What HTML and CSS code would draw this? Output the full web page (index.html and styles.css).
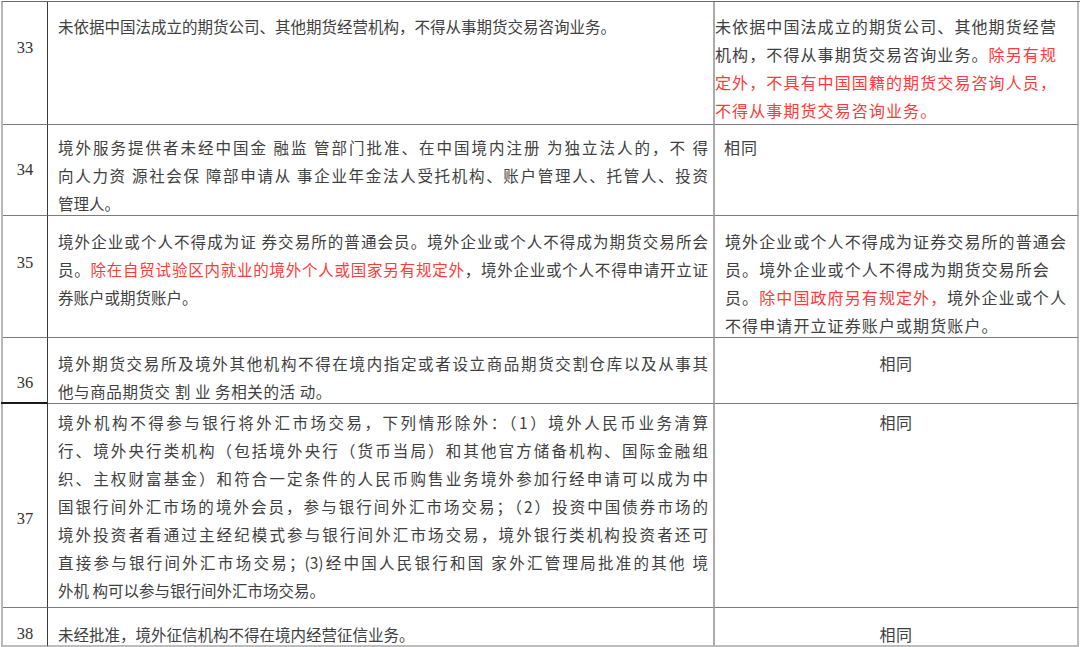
FILE: index.html
```html
<!DOCTYPE html>
<html lang="zh-CN">
<head>
<meta charset="utf-8">
<title>表格</title>
<link rel="stylesheet" href="styles.css">
</head>
<body>
<div class="table">
  <div class="row r33">
    <div class="cell num">33</div>
    <div class="cell mid">
      <span class="ln">未依据中国法成立的期货公司、其他期货经营机构，不得从事期货交易咨询业务。</span>
    </div>
    <div class="cell side flush">
      <span class="ln">未依据中国法成立的期货公司、其他期货经营</span>
      <span class="ln">机构，不得从事期货交易咨询业务。<span class="red">除另有规</span></span>
      <span class="ln red">定外，不具有中国国籍的期货交易咨询人员，</span>
      <span class="ln red">不得从事期货交易咨询业务。</span>
    </div>
  </div>
  <div class="row r34">
    <div class="cell num">34</div>
    <div class="cell mid">
      <span class="ln j">境外服务提供者未经中国金 融监 管部门批准、在中国境内注册 为独立法人的，不 得</span>
      <span class="ln j">向人力资 源社会保 障部申请从 事企业年金法人受托机构、账户管理人、托管人、投资</span>
      <span class="ln">管理人。</span>
    </div>
    <div class="cell side">
      <span class="ln">相同</span>
    </div>
  </div>
  <div class="row r35">
    <div class="cell num">35</div>
    <div class="cell mid">
      <span class="ln j">境外企业或个人不得成为证 券交易所的普通会员。境外企业或个人不得成为期货交易所会</span>
      <span class="ln j">员。<span class="red">除在自贸试验区内就业的境外个人或国家另有规定外</span>，境外企业或个人不得申请开立证</span>
      <span class="ln">券账户或期货账户。</span>
    </div>
    <div class="cell side">
      <span class="ln">境外企业或个人不得成为证券交易所的普通会</span>
      <span class="ln">员。境外企业或个人不得成为期货交易所会</span>
      <span class="ln">员。<span class="red">除中国政府另有规定外，</span>境外企业或个人</span>
      <span class="ln">不得申请开立证券账户或期货账户。</span>
    </div>
  </div>
  <div class="row r36">
    <div class="cell num thick">36</div>
    <div class="cell mid">
      <span class="ln j">境外期货交易所及境外其他机构不得在境内指定或者设立商品期货交割仓库以及从事其</span>
      <span class="ln spaced">他与商品期货交 割 业 务相关的活 动。</span>
    </div>
    <div class="cell side center">
      <span class="ln">相同</span>
    </div>
  </div>
  <div class="row r37">
    <div class="cell num">37</div>
    <div class="cell mid">
      <span class="ln j">境外机构不得参与银行将外汇市场交易，下列情形除外：（1）境外人民币业务清算</span>
      <span class="ln j">行、境外央行类机构（包括境外央行（货币当局）和其他官方储备机构、国际金融组</span>
      <span class="ln j">织、主权财富基金）和符合一定条件的人民币购售业务境外参加行经申请可以成为中</span>
      <span class="ln j">国银行间外汇市场的境外会员，参与银行间外汇市场交易；（2）投资中国债券市场的</span>
      <span class="ln j">境外投资者看通过主经纪模式参与银行间外汇市场交易，境外银行类机构投资者还可</span>
      <span class="ln j">直接参与银行间外汇市场交易；(3)经中国人民银行和国 家外汇管理局批准的其他 境</span>
      <span class="ln">外机 构可以参与银行间外汇市场交易。</span>
    </div>
    <div class="cell side center">
      <span class="ln">相同</span>
    </div>
  </div>
  <div class="row r38">
    <div class="cell num">38</div>
    <div class="cell mid">
      <span class="ln">未经批准，境外征信机构不得在境内经营征信业务。</span>
    </div>
    <div class="cell side center">
      <span class="ln">相同</span>
    </div>
  </div>
</div>
</body>
</html>
```

FILE: styles.css
```css
html, body {
  margin: 0;
  padding: 0;
  background: #ffffff;
  overflow: hidden;
}

body {
  width: 1080px;
  height: 647px;
  font-family: "Noto Sans CJK SC", "Noto Sans", sans-serif;
  color: #404040;
}

.table {
  margin: 1px 0 0 1px;
  width: 1079px;
  border-left: 2px solid #b8b8b8;
  border-top: 1px solid #6a6a6a;
  box-sizing: border-box;
}

.row {
  display: grid;
  grid-template-columns: 45px 667px 364px;
  box-sizing: border-box;
  --pt: 10px;
}

.r33 { height: 123px; --pt: 10px; }
.r34 { height: 91px;  --pt: 8px; }
.r35 { height: 122px; --pt: 11px; }
.r36 { height: 66px;  --pt: 11px; }
.r37 { height: 204px; --pt: 4px; }
.r38 { height: 39px;  --pt: 12px; }

.cell {
  box-sizing: border-box;
  border-bottom: 1px solid #7c7c7c;
  padding-top: var(--pt);
  overflow: hidden;
}

.r38 .cell {
  border-bottom: 2px solid #bdbdbd;
}

.num {
  border-right: 1px solid #3c3c3c;
  text-align: center;
  font-family: "Liberation Serif", "DejaVu Serif", serif;
  font-size: 16.5px;
  line-height: 20px;
  color: #333;
  padding-top: 36px;
}

.r34 .num { padding-top: 35px; }
.r35 .num { padding-top: 37px; }
.r36 .num { padding-top: 35px; }
.r37 .num { padding-top: 105px; }
.r38 .num { padding-top: 16px; }

.num.thick {
  border-bottom: 2px solid #1a1a1a;
  margin-left: -2px;
  padding-left: 2px;
  width: 47px;
}

.mid {
  border-right: 2px solid #ababab;
  padding-left: 10px;
  padding-right: 5px;
  font-size: 15.5px;
  line-height: 28px;
}

.side {
  border-right: 2px solid #bcbcbc;
  padding-left: 9px;
  font-size: 16px;
  letter-spacing: 1.1px;
  line-height: 28px;
}

.r35 .side { padding-left: 10px; }

.side.flush {
  padding-left: 0;
}

.side.center {
  text-align: center;
  padding-left: 0;
  letter-spacing: 0.5px;
}

.ln {
  display: block;
  white-space: nowrap;
}

.ln.j {
  text-align: justify;
  text-align-last: justify;
  white-space: normal;
}

.ln.spaced {
  letter-spacing: 0.6px;
}

.red {
  color: #ff3a3a;
}
```
